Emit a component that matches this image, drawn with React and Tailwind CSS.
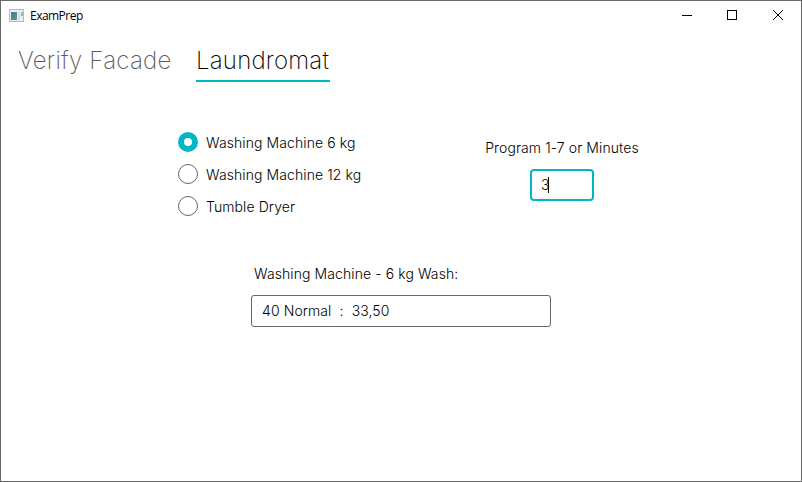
const radios = ["Washing Machine 6 kg", "Washing Machine 12 kg", "Tumble Dryer"];

export default function App() {
  return (
    <div className="flex h-[482px] w-[802px] flex-col border border-[#6b6969] bg-white font-['Inter',sans-serif] text-sm font-light tracking-[0.09px] text-black">
      <header className="flex h-[29px] items-center">
        <svg className="ml-2 mr-[6px]" width="15" height="13" viewBox="0 0 15 13">
          <defs>
            <linearGradient id="pane" x2="1" y2="1">
              <stop stopColor="#4b78a8" />
              <stop offset="1" stopColor="#4fa07a" />
            </linearGradient>
          </defs>
          <rect x=".5" y=".5" width="14" height="12" fill="#eceef0" stroke="#b4b8bd" />
          <rect x="2" y="3" width="6" height="8" fill="url(#pane)" />
          <rect x="9" y="3" width="2" height="8" fill="#d9dde1" />
          <rect x="12" y="3" width="2" height="4" fill="#8fbfa8" />
        </svg>
        <span className="font-['Open_Sans',sans-serif] text-xs font-normal tracking-[-0.53px] text-black">ExamPrep</span>
        <div className="ml-auto flex">
          <svg width="137" height="29" viewBox="0 0 137 29" fill="none" stroke="#000" shapeRendering="crispEdges">
            <path d="M18 14.5h10" />
            <rect x="63.5" y="9.5" width="9" height="9" />
            <path d="M109 9l10 10M119 9l-10 10" shapeRendering="auto" />
          </svg>
        </div>
      </header>
      <nav className="flex h-[52px] items-start pl-[17px] text-2xl font-extralight">
        <div className="flex h-[52px] w-[178px] items-center whitespace-nowrap pt-[10px] tracking-[0.24px] text-[#5c5c5c]">Verify Facade</div>
        <div className="flex h-[52px] w-[134px] items-center whitespace-nowrap border-b-2 border-[#00b7c3] pt-[12px] tracking-[0.22px] text-black">Laundromat</div>
      </nav>
      <main>
        <section className="flex pl-[177px] pt-[44px]">
          <div className="flex w-[307px] flex-col">
            {radios.map((label, i) => (
              <label key={label} className="flex h-8 items-center gap-2">
                <span className={i === 0 ? "size-5 rounded-full border-[6px] border-[#00b7c3]" : "size-5 rounded-full border border-[#666]"} />
                <span className="pt-px">{label}</span>
              </label>
            ))}
          </div>
          <div className="flex w-[154px] flex-col items-center pt-[12px]">
            <span className="whitespace-nowrap leading-5">Program 1-7 or Minutes</span>
            <div className="mt-[11px] flex h-8 w-16 items-center rounded-[4px] border-2 border-[#00b7c3] pl-[9px]">
              3<span className="-ml-[2px] h-4 w-px bg-black" />
            </div>
          </div>
        </section>
        <section className="pl-[250px] pt-[42px]">
          <div className="pl-[3px] leading-5">Washing Machine - 6 kg Wash:</div>
          <div className="mt-[11px] flex h-8 w-[300px] items-center whitespace-pre rounded-[3px] border border-[#666] pl-[10px]">{"40 Normal  :  33,50"}</div>
        </section>
      </main>
    </div>
  );
}
